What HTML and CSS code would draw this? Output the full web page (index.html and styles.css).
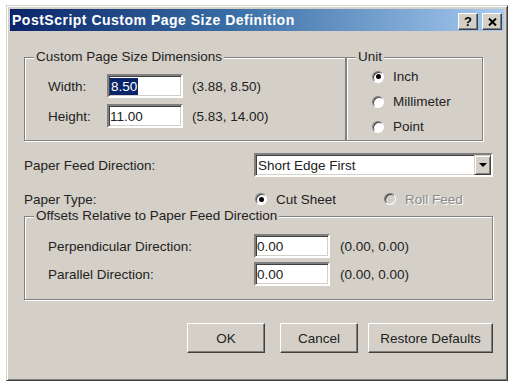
FILE: index.html
```html
<!DOCTYPE html>
<html>
<head>
<meta charset="utf-8">
<link rel="stylesheet" href="styles.css">
</head>
<body>
<div class="dialog">
  <div class="titlebar">
    <span class="title">PostScript Custom Page Size Definition</span>
    <div class="tbtns">
      <span class="tbtn help">?</span>
      <span class="tbtn close"><svg width="9" height="8" viewBox="0 0 9 8"><path d="M1 0.5 L8 7.5 M8 0.5 L1 7.5" stroke="#000" stroke-width="2" fill="none"/></svg></span>
    </div>
  </div>
  <div class="content">
    <div class="row1">
      <fieldset class="group dims">
        <legend>Custom Page Size Dimensions</legend>
        <div class="inner dims-inner">
          <div class="frow"><span class="flabel w59">Width:</span><div class="field"><span class="sel">8.50</span></div><span class="range">(3.88, 8.50)</span></div>
          <div class="frow"><span class="flabel w59">Height:</span><div class="field"><span>11.00</span></div><span class="range">(5.83, 14.00)</span></div>
        </div>
      </fieldset>
      <fieldset class="group unit">
        <legend>Unit</legend>
        <div class="inner unit-inner">
          <div class="opt"><span class="radio on"></span><span>Inch</span></div>
          <div class="opt"><span class="radio"></span><span>Millimeter</span></div>
          <div class="opt"><span class="radio"></span><span>Point</span></div>
        </div>
      </fieldset>
    </div>
    <div class="line feed">
      <span class="llabel">Paper Feed Direction:</span>
      <div class="combo"><span class="ctext">Short Edge First</span><span class="drop"><span class="arrow"></span></span></div>
    </div>
    <div class="line ptype">
      <span class="llabel">Paper Type:</span>
      <div class="opt first"><span class="radio on"></span><span>Cut Sheet</span></div>
      <div class="opt disabled"><span class="radio dis"></span><span>Roll Feed</span></div>
    </div>
    <fieldset class="group offsets">
      <legend>Offsets Relative to Paper Feed Direction</legend>
      <div class="inner off-inner">
        <div class="frow"><span class="flabel w206">Perpendicular Direction:</span><div class="field"><span>0.00</span></div><span class="range r10">(0.00, 0.00)</span></div>
        <div class="frow"><span class="flabel w206">Parallel Direction:</span><div class="field"><span>0.00</span></div><span class="range r10">(0.00, 0.00)</span></div>
      </div>
    </fieldset>
    <div class="buttons">
      <button class="btn ok">OK</button>
      <button class="btn cancel">Cancel</button>
      <button class="btn restore">Restore Defaults</button>
    </div>
  </div>
</div>
</body>
</html>
```
FILE: styles.css
```css
html, body { margin: 0; padding: 0; background: #fff; }
body {
  font-family: "Liberation Sans", Arial, sans-serif;
  font-size: 13.5px;
  color: #222;
}
.dialog {
  box-sizing: border-box;
  margin: 5px 0 0 6px;
  width: 502px;
  height: 376px;
  background: #d4d0c8;
  border: 1px solid;
  border-color: #d4d0c8 #404040 #404040 #d4d0c8;
  box-shadow: inset 1px 1px #fff, inset -1px -1px #808080;
  padding: 3px;
}
.titlebar {
  height: 22px;
  background: linear-gradient(to right, #0a246a 0%, #3a6ea5 45%, #a6caf0 100%);
  display: flex;
  align-items: center;
  justify-content: space-between;
}
.title {
  color: #fff;
  font-weight: bold;
  font-size: 14px;
  padding-left: 2px;
  letter-spacing: 0.5px;
}
.tbtns { display: flex; gap: 4px; padding-right: 2px; padding-top: 3px; }
.tbtn {
  box-sizing: border-box;
  width: 20px;
  height: 17px;
  background: #d4d0c8;
  border: 1px solid;
  border-color: #fff #404040 #404040 #fff;
  box-shadow: inset -1px -1px #808080;
  display: flex;
  align-items: center;
  justify-content: center;
  font-weight: bold;
  font-size: 13px;
  color: #000;
}
.content {
  padding: 19px 11px 0 14px;
  display: flex;
  flex-direction: column;
}
.row1 { display: flex; }
fieldset.group {
  box-sizing: border-box;
  margin: 0;
  padding: 0;
  min-width: 0;
  height: 91px;
  border: 1px solid #808080;
  box-shadow: inset 1px 1px #fff, 1px 1px #fff;
}
legend {
  padding: 0 2px;
  margin-left: 9px;
  height: 14px;
  line-height: 14px;
  background: #d4d0c8;
}
.dims { width: 322px; }
.unit { width: 137px; margin-left: 10px; }
.inner { display: flex; flex-direction: column; }
.dims-inner { padding: 10px 0 0 23px; gap: 6px; }
.off-inner { padding: 11px 0 0 23px; gap: 4px; }
.unit-inner { padding: 0 0 0 25px; }
.frow { display: flex; align-items: center; height: 24px; }
.flabel { flex: none; }
.w59 { width: 59px; }
.w206 { width: 206px; }
.field, .combo {
  box-sizing: border-box;
  background: #fff;
  border: 2px solid;
  border-color: #808080 #fff #fff #808080;
  box-shadow: inset 1px 1px #404040, inset -1px -1px #d4d0c8;
  height: 24px;
  display: flex;
  align-items: center;
}
.field { width: 76px; padding-left: 1px; }
.sel { background: #0a246a; color: #fff; padding: 1px 1px; }
.range { margin-left: 9px; }
.r10 { margin-left: 10px; }
.opt { display: flex; align-items: center; height: 25px; }
.radio {
  box-sizing: border-box;
  flex: none;
  width: 12px;
  height: 12px;
  border-radius: 50%;
  background: #fff;
  border: 1px solid;
  border-color: #808080 #fff #fff #808080;
  box-shadow: inset 1px 1px #404040;
  margin-right: 9px;
  display: flex;
  align-items: center;
  justify-content: center;
}
.radio.on::after {
  content: "";
  width: 5px;
  height: 5px;
  border-radius: 50%;
  background: #000;
}
.radio.dis { background: #d4d0c8; }
.line { display: flex; align-items: center; }
.feed { margin-top: 12px; height: 24px; }
.ptype { margin-top: 12px; height: 20px; }
.llabel { width: 230px; flex: none; }
.combo { width: 239px; justify-content: space-between; padding-left: 2px; }
.drop {
  box-sizing: border-box;
  width: 17px;
  height: 20px;
  background: #d4d0c8;
  border: 1px solid;
  border-color: #d4d0c8 #404040 #404040 #d4d0c8;
  box-shadow: inset 1px 1px #fff, inset -1px -1px #808080;
  display: flex;
  align-items: center;
  justify-content: center;
}
.arrow {
  width: 0; height: 0;
  border-left: 4px solid transparent;
  border-right: 4px solid transparent;
  border-top: 4px solid #000;
}
.ptype .opt { height: 20px; }
.ptype .first { width: 129px; margin-left: 1px; }
.disabled { color: #8a8a8a; text-shadow: 1px 1px #fff; }
.offsets { width: 469px; margin-top: 10px; }
.buttons { display: flex; justify-content: flex-end; margin-top: 23px; }
.btn {
  box-sizing: border-box;
  height: 30px;
  font-family: "Liberation Sans", Arial, sans-serif;
  font-size: 13.5px;
  color: #222;
  background: #d4d0c8;
  border: 1px solid;
  border-color: #fff #404040 #404040 #fff;
  box-shadow: inset -1px -1px #808080, inset 1px 1px #d4d0c8;
  padding: 0;
}
.ok { width: 78px; margin-right: 15px; }
.cancel { width: 78px; margin-right: 10px; }
.restore { width: 125px; }
```
